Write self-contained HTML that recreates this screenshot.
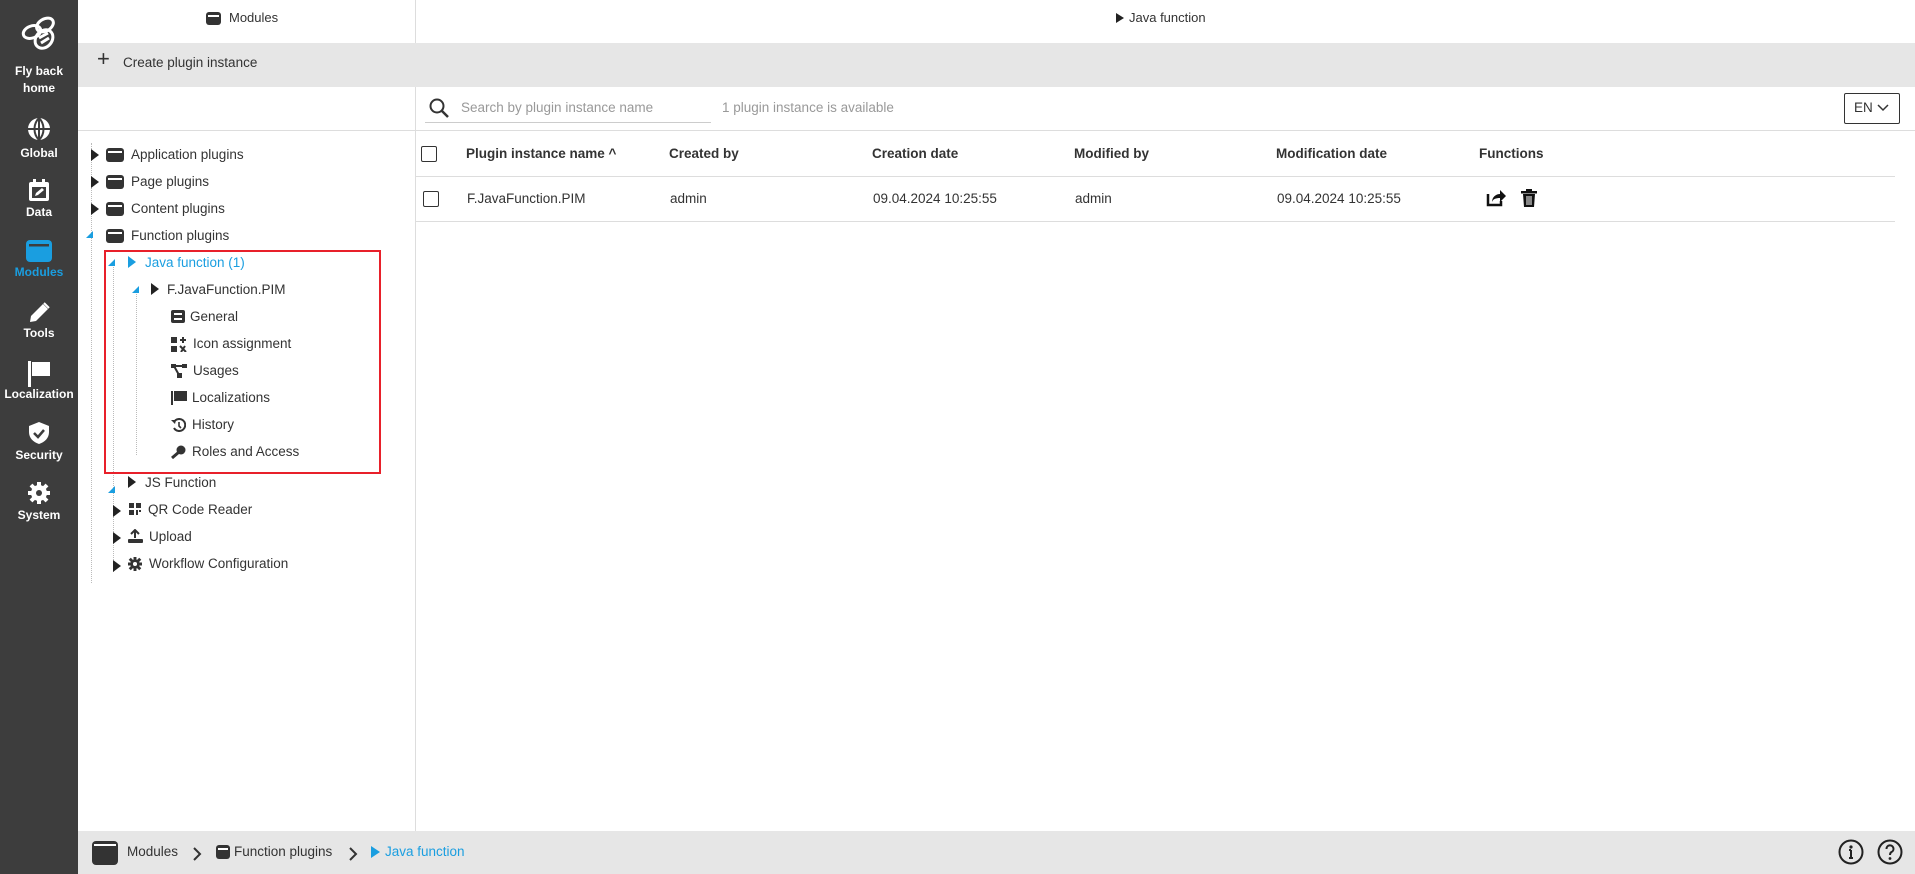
<!DOCTYPE html>
<html><head><meta charset="utf-8"><style>
*{box-sizing:border-box;margin:0;padding:0}
body{width:1915px;height:874px;position:relative;overflow:hidden;background:#fff;font-family:"Liberation Sans",Arial,sans-serif;color:#333;font-size:13.5px}
.abs{position:absolute}
#side{left:0;top:0;width:78px;height:874px;background:#3d3d3d;color:#fff;font-weight:bold;font-size:12px;text-align:center}
.si{position:absolute;left:0;width:78px;text-align:center}
.si svg{display:block;margin:0 auto}
.t{position:absolute;white-space:nowrap;line-height:16px}
.ic{position:absolute;width:18px;height:14px;background:#333;border-radius:3px}
.ic:after{content:"";position:absolute;left:2px;right:2px;top:3px;height:2px;background:#fff}
.tri{position:absolute;width:0;height:0;border-top:6px solid transparent;border-bottom:6px solid transparent;border-left:8px solid #222}
.exp{position:absolute;width:0;height:0;border-left:7px solid transparent;border-bottom:7px solid #1a9ee0}
.chk{position:absolute;width:16px;height:16px;border:1.5px solid #333;border-radius:2px}
</style></head><body>
<div id="side" class="abs">
 <div class="si" style="top:14px"><svg width="40" height="40" viewBox="0 0 40 40" fill="none" stroke="#fff" stroke-width="3"><ellipse cx="26" cy="11" rx="9" ry="6" transform="rotate(-30 26 11)"/><ellipse cx="13" cy="18" rx="9" ry="6" transform="rotate(-20 13 18)"/><ellipse cx="25" cy="25" rx="8" ry="10" transform="rotate(40 25 25)"/><path d="M20 24l9-5M22 29l8-5"/></svg></div>
 <div class="si" style="top:63px;line-height:17px">Fly back<br>home</div>
 <div class="si" style="top:117px"><svg width="24" height="24" viewBox="0 0 24 24"><circle cx="12" cy="12" r="11" fill="#fff"/><path d="M1 12h22M12 1v22M12 1c-6 6-6 16 0 22M12 1c6 6 6 16 0 22" stroke="#3d3d3d" stroke-width="2" fill="none"/></svg></div>
 <div class="si" style="top:146px">Global</div>
 <div class="si" style="top:178px"><svg width="24" height="24" viewBox="0 0 24 24"><rect x="2" y="4" width="20" height="19" rx="2" fill="#fff"/><rect x="5" y="9" width="14" height="11" fill="#3d3d3d"/><rect x="6" y="1" width="3" height="5" fill="#fff"/><rect x="15" y="1" width="3" height="5" fill="#fff"/><path d="M8 18l1-3 6-5 2 2-6 5z" fill="#fff"/></svg></div>
 <div class="si" style="top:205px">Data</div>
 <div class="si" style="top:240px"><svg width="26" height="22" viewBox="0 0 26 22"><rect x="0" y="0" width="26" height="22" rx="4" fill="#1a9ee0"/><rect x="3" y="4" width="20" height="2.5" fill="#3d3d3d"/></svg></div>
 <div class="si" style="top:265px;color:#1a9ee0">Modules</div>
 <div class="si" style="top:301px"><svg width="24" height="24" viewBox="0 0 24 24"><path d="M3 21l1-6L16 3l5 5L9 20z" fill="#fff"/><path d="M17 2l5 5" stroke="#fff" stroke-width="2"/></svg></div>
 <div class="si" style="top:326px">Tools</div>
 <div class="si" style="top:361px"><svg width="24" height="26" viewBox="0 0 24 26"><rect x="1" y="0" width="3" height="26" fill="#fff"/><path d="M5 1h18v14H5z" fill="#fff"/></svg></div>
 <div class="si" style="top:387px">Localization</div>
 <div class="si" style="top:421px"><svg width="24" height="24" viewBox="0 0 24 24"><path d="M12 1l10 4v6c0 6-4 10-10 12C6 21 2 17 2 11V5z" fill="#fff"/><path d="M7 12l4 4 6-7" stroke="#3d3d3d" stroke-width="2.5" fill="none"/></svg></div>
 <div class="si" style="top:448px">Security</div>
 <div class="si" style="top:481px"><svg width="24" height="24" viewBox="0 0 24 24"><circle cx="12" cy="12" r="8" fill="#fff"/><g stroke="#fff" stroke-width="4"><path d="M12 1v22M1 12h22M4 4l16 16M20 4L4 20"/></g><circle cx="12" cy="12" r="3" fill="#3d3d3d"/></svg></div>
 <div class="si" style="top:508px">System</div>
</div>

<div class="abs" style="left:415px;top:0;width:1px;height:831px;background:#ddd"></div>
<div class="ic" style="left:206px;top:12px;width:15px;height:13px"></div>
<div class="t" style="left:229px;top:10px;font-size:13px">Modules</div>
<div class="abs" style="left:78px;top:43px;width:1837px;height:44px;background:#e6e6e6"></div>
<div class="t" style="left:97px;top:51px;font-size:22px;font-weight:300">+</div>
<div class="t" style="left:123px;top:55px">Create plugin instance</div>
<div class="abs" style="left:78px;top:130px;width:1837px;height:1px;background:#ddd"></div>

<div class="abs" style="left:91px;top:143px;height:440px;border-left:1px dotted #bbb"></div>
<div class="abs" style="left:113px;top:262px;height:310px;border-left:1px dotted #bbb"></div>
<div class="abs" style="left:136px;top:290px;height:165px;border-left:1px dotted #bbb"></div>

<div class="tri" style="left:91px;top:149px"></div><div class="ic" style="left:106px;top:148px"></div><div class="t" style="left:131px;top:147px">Application plugins</div>
<div class="tri" style="left:91px;top:176px"></div><div class="ic" style="left:106px;top:175px"></div><div class="t" style="left:131px;top:174px">Page plugins</div>
<div class="tri" style="left:91px;top:203px"></div><div class="ic" style="left:106px;top:202px"></div><div class="t" style="left:131px;top:201px">Content plugins</div>
<div class="exp" style="left:86px;top:231px"></div><div class="ic" style="left:106px;top:229px"></div><div class="t" style="left:131px;top:228px">Function plugins</div>

<div class="abs" style="left:104px;top:250px;width:277px;height:224px;border:2px solid #e8202a"></div>
<div class="exp" style="left:108px;top:259px"></div><div class="tri" style="left:128px;top:256px;border-left-color:#1a9ee0"></div><div class="t" style="left:145px;top:255px;color:#1a9ee0">Java function (1)</div>
<div class="exp" style="left:132px;top:286px"></div><div class="tri" style="left:151px;top:283px"></div><div class="t" style="left:167px;top:282px">F.JavaFunction.PIM</div>
<svg class="abs" style="left:171px;top:310px" width="14" height="13"><rect width="14" height="13" rx="2" fill="#333"/><path d="M3 4h8M3 9h8" stroke="#fff" stroke-width="2"/></svg><div class="t" style="left:190px;top:309px">General</div>
<svg class="abs" style="left:171px;top:337px" width="16" height="15"><rect x="0" y="0" width="6" height="6" fill="#333"/><rect x="0" y="9" width="6" height="6" fill="#333"/><path d="M9 3h6M12 0v6M9 9l6 6M10 15l4-6" stroke="#333" stroke-width="2"/></svg><div class="t" style="left:193px;top:336px">Icon assignment</div>
<svg class="abs" style="left:171px;top:364px" width="16" height="14"><rect x="0" y="0" width="5" height="4" fill="#333"/><rect x="11" y="0" width="5" height="4" fill="#333"/><rect x="6" y="9" width="5" height="5" fill="#333"/><path d="M3 2h10M3 2l5 9" stroke="#333" stroke-width="2"/></svg><div class="t" style="left:193px;top:363px">Usages</div>
<svg class="abs" style="left:171px;top:391px" width="16" height="14"><rect x="0" y="0" width="2" height="14" fill="#333"/><path d="M3 0h13v10H3z" fill="#333"/></svg><div class="t" style="left:192px;top:390px">Localizations</div>
<svg class="abs" style="left:171px;top:418px" width="15" height="14" viewBox="0 0 15 14"><path d="M3 4a6 6 0 1 1 0 6" stroke="#333" stroke-width="2" fill="none"/><path d="M0 2l5 0-1 4z" fill="#333"/><path d="M8 4v4l2 2" stroke="#333" stroke-width="1.6" fill="none"/></svg><div class="t" style="left:192px;top:417px">History</div>
<svg class="abs" style="left:171px;top:445px" width="15" height="14"><circle cx="10" cy="5" r="4.5" fill="#333"/><path d="M8 7L1 13" stroke="#333" stroke-width="3"/></svg><div class="t" style="left:192px;top:444px">Roles and Access</div>

<div class="exp" style="left:108px;top:486px"></div><div class="tri" style="left:128px;top:476px"></div><div class="t" style="left:145px;top:475px">JS Function</div>
<div class="tri" style="left:113px;top:505px"></div><svg class="abs" style="left:129px;top:503px" width="12" height="12"><rect width="5" height="5" fill="#333"/><rect x="7" width="5" height="5" fill="#333"/><rect y="7" width="5" height="5" fill="#333"/><rect x="7" y="7" width="2" height="5" fill="#333"/><rect x="10" y="7" width="2" height="2" fill="#333"/></svg><div class="t" style="left:148px;top:502px">QR Code Reader</div>
<div class="tri" style="left:113px;top:532px"></div><svg class="abs" style="left:128px;top:529px" width="15" height="14"><path d="M7 1v8M3 5l4-4 4 4" stroke="#333" stroke-width="2" fill="none"/><rect x="0" y="10" width="15" height="4" rx="1" fill="#333"/></svg><div class="t" style="left:149px;top:529px">Upload</div>
<div class="tri" style="left:113px;top:560px"></div><svg class="abs" style="left:128px;top:557px" width="14" height="14" viewBox="0 0 24 24"><circle cx="12" cy="12" r="8" fill="#333"/><g stroke="#333" stroke-width="5"><path d="M12 0v24M0 12h24M3 3l18 18M21 3L3 21"/></g><circle cx="12" cy="12" r="3.5" fill="#fff"/></svg><div class="t" style="left:149px;top:556px">Workflow Configuration</div>

<div class="tri" style="left:1116px;top:13px;border-top-width:5px;border-bottom-width:5px;border-left-width:8px"></div>
<div class="t" style="left:1129px;top:10px;font-size:13px">Java function</div>

<svg class="abs" style="left:429px;top:98px" width="20" height="20"><circle cx="8" cy="8" r="6.5" stroke="#333" stroke-width="2" fill="none"/><path d="M13 13l6 6" stroke="#333" stroke-width="2.5"/></svg>
<div class="t" style="left:461px;top:100px;color:#999">Search by plugin instance name</div>
<div class="abs" style="left:425px;top:122px;width:286px;height:1px;background:#ccc"></div>
<div class="t" style="left:722px;top:100px;color:#999">1 plugin instance is available</div>
<div class="abs" style="left:1844px;top:93px;width:56px;height:31px;border:1px solid #333;border-radius:2px"></div>
<div class="t" style="left:1854px;top:100px">EN</div>
<svg class="abs" style="left:1877px;top:104px" width="12" height="8"><path d="M1 1l5 5 5-5" stroke="#333" stroke-width="1.5" fill="none"/></svg>

<div class="chk" style="left:421px;top:146px"></div>
<div class="t" style="left:466px;top:146px;font-weight:bold">Plugin instance name ^</div>
<div class="t" style="left:669px;top:146px;font-weight:bold">Created by</div>
<div class="t" style="left:872px;top:146px;font-weight:bold">Creation date</div>
<div class="t" style="left:1074px;top:146px;font-weight:bold">Modified by</div>
<div class="t" style="left:1276px;top:146px;font-weight:bold">Modification date</div>
<div class="t" style="left:1479px;top:146px;font-weight:bold">Functions</div>
<div class="abs" style="left:416px;top:176px;width:1479px;height:1px;background:#ddd"></div>
<div class="chk" style="left:423px;top:191px"></div>
<div class="t" style="left:467px;top:191px">F.JavaFunction.PIM</div>
<div class="t" style="left:670px;top:191px">admin</div>
<div class="t" style="left:873px;top:191px">09.04.2024 10:25:55</div>
<div class="t" style="left:1075px;top:191px">admin</div>
<div class="t" style="left:1277px;top:191px">09.04.2024 10:25:55</div>
<svg class="abs" style="left:1486px;top:189px" width="20" height="18"><path d="M2 5v11h13v-4" stroke="#111" stroke-width="2.5" fill="none"/><path d="M6 13c0-5 4-8 8-8V1l6 6-6 6V9c-4 0-7 1-8 4z" fill="#111"/></svg>
<svg class="abs" style="left:1521px;top:189px" width="16" height="18"><rect x="0" y="2" width="16" height="2.5" fill="#111"/><rect x="5" y="0" width="6" height="3" fill="#111"/><path d="M2 5h12l-1 13H3z" fill="#111"/><path d="M6 7v9M8 7v9M10 7v9" stroke="#fff" stroke-width="1"/></svg>
<div class="abs" style="left:416px;top:221px;width:1479px;height:1px;background:#ddd"></div>

<div class="abs" style="left:78px;top:831px;width:1837px;height:43px;background:#e6e6e6"></div>
<div class="ic" style="left:92px;top:841px;width:26px;height:24px;border-radius:4px"></div>
<div class="t" style="left:127px;top:844px">Modules</div>
<svg class="abs" style="left:192px;top:846px" width="10" height="16"><path d="M2 2l6 6-6 6" stroke="#333" stroke-width="2" fill="none"/></svg>
<div class="ic" style="left:216px;top:845px;width:14px;height:14px"></div>
<div class="t" style="left:234px;top:844px">Function plugins</div>
<svg class="abs" style="left:348px;top:846px" width="10" height="16"><path d="M2 2l6 6-6 6" stroke="#333" stroke-width="2" fill="none"/></svg>
<div class="tri" style="left:371px;top:846px;border-left-color:#1a9ee0;border-left-width:9px;border-top-width:6px;border-bottom-width:6px"></div>
<div class="t" style="left:385px;top:844px;color:#1a9ee0">Java function</div>
<svg class="abs" style="left:1838px;top:839px" width="26" height="26"><circle cx="13" cy="13" r="11.5" stroke="#222" stroke-width="2" fill="none"/><circle cx="13" cy="8" r="1.6" fill="#222"/><path d="M13 11v8M11 19h4M11 11h2" stroke="#222" stroke-width="2"/></svg>
<svg class="abs" style="left:1877px;top:839px" width="26" height="26"><circle cx="13" cy="13" r="11.5" stroke="#222" stroke-width="2" fill="none"/><path d="M9.5 10a3.5 3.5 0 1 1 5 3c-1.2.7-1.5 1.3-1.5 3" stroke="#222" stroke-width="2" fill="none"/><circle cx="13" cy="19.5" r="1.4" fill="#222"/></svg>
</body></html>
